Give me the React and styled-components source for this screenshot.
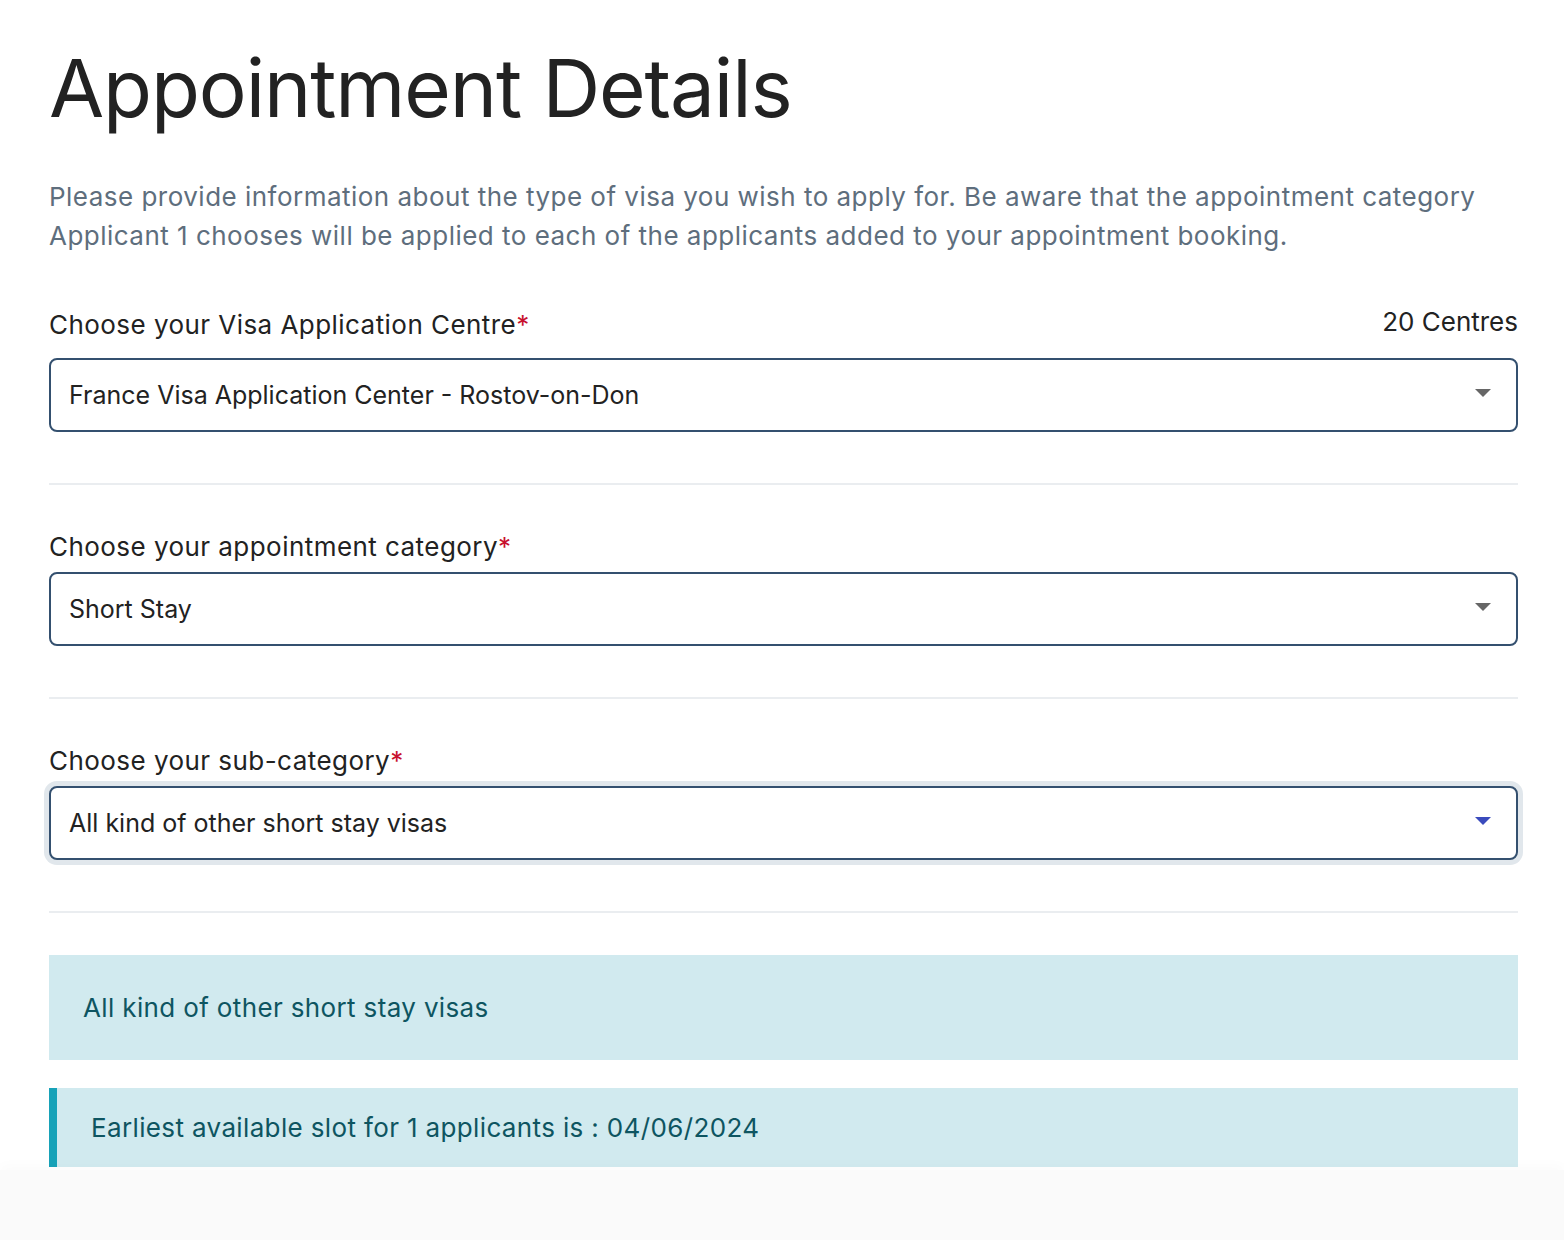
import React from 'react'
import styled, { createGlobalStyle } from 'styled-components'

const GlobalStyle = createGlobalStyle`
  * { box-sizing: border-box; }
  body {
    margin: 0;
    background: #ffffff;
    font-family: Inter, "Noto Sans", "Liberation Sans", sans-serif;
    color: #222222;
  }
`

const Page = styled.div`
  height: 1240px;
  display: flex;
  flex-direction: column;
  overflow: hidden;
`

const Main = styled.main`
  flex: 0 0 1170px;
  overflow: hidden;
  padding: 40px 46px 0 49px;
`

const Footer = styled.div`
  flex: 1;
  background: #fafafa;
  box-shadow: 0 -6px 10px rgba(0, 0, 0, 0.015);
`

const Title = styled.h1`
  margin: 0;
  font-size: 80px;
  line-height: 96px;
  font-weight: 400;
  color: #222222;
  letter-spacing: -1.1px;
`

const Intro = styled.p`
  margin: 41px 0 0;
  font-size: 26px;
  line-height: 39px;
  color: #5e6e7d;
  letter-spacing: 0.48px;
`

const Field = styled.section`
  margin-top: ${({ $top }) => $top}px;
`

const FieldHeader = styled.div`
  display: flex;
  justify-content: space-between;
  align-items: flex-start;
  margin-bottom: ${({ $gap }) => $gap}px;
`

const Label = styled.label`
  font-size: 26px;
  line-height: 39px;
  color: #222222;
  letter-spacing: 0.45px;
`

const Required = styled.span`
  color: #c8102e;
`

const Count = styled.span`
  font-size: 26px;
  line-height: 33px;
  color: #222222;
`

const Select = styled.div`
  height: 74px;
  display: flex;
  align-items: center;
  justify-content: space-between;
  padding: 0 25px 0 18px;
  border: 2px solid #34506f;
  border-radius: 8px;
  background: #ffffff;
  font-size: 25px;
  color: #222222;
  box-shadow: ${({ $focused }) => ($focused ? '0 0 0 5px #e1e7ec' : 'none')};
`

const Caret = styled.span`
  width: 0;
  height: 0;
  border-left: 8px solid transparent;
  border-right: 8px solid transparent;
  border-top: 8px solid ${({ $focused }) => ($focused ? '#3a4bbd' : '#666666')};
  margin-top: -4px;
`

const Divider = styled.hr`
  margin: 51px 0 0;
  border: 0;
  height: 2px;
  background: #eaedf0;
`

const Alert = styled.div`
  margin-top: ${({ $top }) => $top}px;
  background: #d1eaef;
  color: #0e5561;
  font-size: 26px;
  line-height: 39px;
  letter-spacing: 0.36px;
  padding: ${({ $pad }) => $pad};
  border-left: ${({ $accent }) => ($accent ? '8px solid #17a2b8' : 'none')};
`

const fields = [
  { label: 'Choose your Visa Application Centre', value: 'France Visa Application Center - Rostov-on-Don', count: '20 Centres', top: 50, gap: 14 },
  { label: 'Choose your appointment category', value: 'Short Stay', top: 42, gap: 6 },
  { label: 'Choose your sub-category', value: 'All kind of other short stay visas', top: 42, gap: 6, focused: true },
]

export default function App() {
  return (
    <Page>
      <GlobalStyle />
      <Main>
        <Title>Appointment Details</Title>
        <Intro>
          Please provide information about the type of visa you wish to apply for. Be aware that the appointment category
          Applicant 1 chooses will be applied to each of the applicants added to your appointment booking.
        </Intro>
        {fields.map((f) => (
          <Field key={f.label} $top={f.top}>
            <FieldHeader $gap={f.gap}>
              <Label>
                {f.label}
                <Required>*</Required>
              </Label>
              {f.count && <Count>{f.count}</Count>}
            </FieldHeader>
            <Select $focused={f.focused}>
              <span>{f.value}</span>
              <Caret $focused={f.focused} />
            </Select>
            <Divider />
          </Field>
        ))}
        <Alert $top={42} $pad="33px 34px">All kind of other short stay visas</Alert>
        <Alert $top={28} $pad="20px 34px" $accent>
          Earliest available slot for 1 applicants is : 04/06/2024
        </Alert>
      </Main>
      <Footer />
    </Page>
  )
}
